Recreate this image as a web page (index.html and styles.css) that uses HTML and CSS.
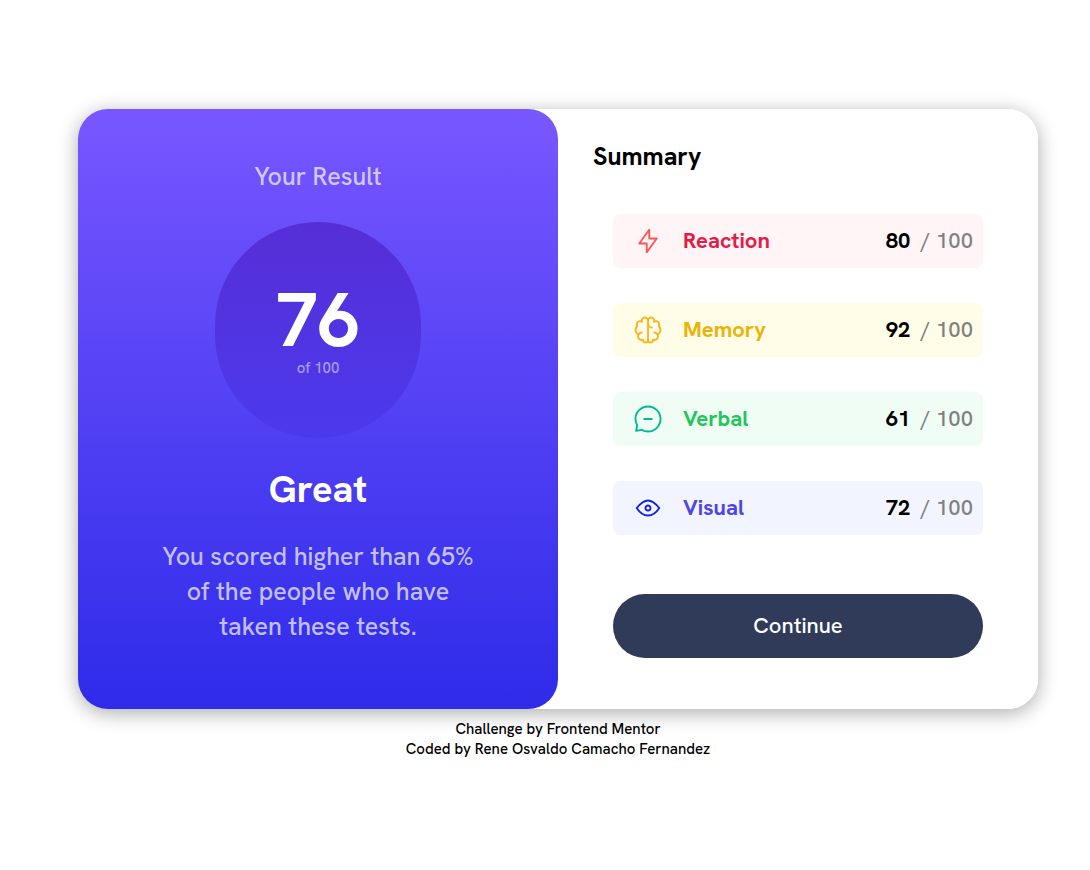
FILE: index.html
```html
<!DOCTYPE html>
<html lang="en">
<head>
  <meta charset="UTF-8">
  <meta name="viewport" content="width=device-width, initial-scale=1">
  <title>Results summary</title>
  <link rel="stylesheet" href="styles.css">
</head>
<body>
  <main class="card">
    <section class="result">
      <h1 class="result-title">Your Result</h1>
      <div class="score">
        <span class="score-value">76</span>
        <span class="score-total">of 100</span>
      </div>
      <h2 class="grade">Great</h2>
      <p class="description">You scored higher than 65% of the people who have taken these tests.</p>
    </section>
    <section class="summary">
      <h2 class="summary-title">Summary</h2>
      <ul class="stats">
        <li class="stat reaction">
          <svg class="icon" viewBox="0 0 20 20" aria-hidden="true"><path d="M10.833 8.333V2.5l-6.666 9.167h5V17.5l6.666-9.167h-5Z"/></svg>
          <span class="stat-name">Reaction</span>
          <span class="stat-score"><strong>80</strong> / 100</span>
        </li>
        <li class="stat memory">
          <svg class="icon" viewBox="0 0 20 20" aria-hidden="true"><path d="M5.833 11.667a2.5 2.5 0 1 0 .834 4.858"/><path d="M3.553 13.004a3.333 3.333 0 0 1-.728-5.53m.025-.067a2.083 2.083 0 0 1 2.983-2.824m.199.054A2.083 2.083 0 1 1 10 3.75v12.917a1.667 1.667 0 0 1-3.333 0M10 5.833a2.5 2.5 0 0 0 2.5 2.5m1.667 3.334a2.5 2.5 0 1 1-.834 4.858"/><path d="M16.447 13.004a3.334 3.334 0 0 0 .728-5.53m-.025-.067a2.083 2.083 0 0 0-2.983-2.824M10 3.75a2.085 2.085 0 0 1 2.538-2.033 2.084 2.084 0 0 1 1.43 2.92m-.635 12.03a1.667 1.667 0 0 1-3.333 0"/></svg>
          <span class="stat-name">Memory</span>
          <span class="stat-score"><strong>92</strong> / 100</span>
        </li>
        <li class="stat verbal">
          <svg class="icon" viewBox="0 0 20 20" aria-hidden="true"><path d="M7.5 10h5M10 18.333A8.333 8.333 0 1 0 1.667 10c0 1.518.406 2.942 1.115 4.167l-.699 3.75 3.75-.699A8.295 8.295 0 0 0 10 18.333Z"/></svg>
          <span class="stat-name">Verbal</span>
          <span class="stat-score"><strong>61</strong> / 100</span>
        </li>
        <li class="stat visual">
          <svg class="icon" viewBox="0 0 20 20" aria-hidden="true"><path d="M10 11.667a1.667 1.667 0 1 0 0-3.334 1.667 1.667 0 0 0 0 3.334Z"/><path d="M17.5 10c-1.574 2.492-4.402 5-7.5 5s-5.926-2.508-7.5-5C4.416 7.632 6.66 5 10 5s5.584 2.632 7.5 5Z"/></svg>
          <span class="stat-name">Visual</span>
          <span class="stat-score"><strong>72</strong> / 100</span>
        </li>
      </ul>
      <button class="continue" type="button">Continue</button>
    </section>
  </main>
  <footer class="attribution">
    <p>Challenge by Frontend Mentor</p>
    <p>Coded by Rene Osvaldo Camacho Fernandez</p>
  </footer>
</body>
</html>
```
FILE: styles.css
```css
* {
  box-sizing: border-box;
  margin: 0;
  padding: 0;
}

body {
  padding: 109px 52px 40px 78px;
  background: #fff;
  color: #000;
  font-family: "Hanken Grotesk", Roboto, sans-serif;
}

.card {
  display: grid;
  grid-template-columns: 1fr 1fr;
  border-radius: 30px;
  box-shadow: 0 4px 20px rgba(0, 0, 0, 0.33);
}

.result {
  display: flex;
  flex-direction: column;
  align-items: center;
  padding: 50px 80px 65px;
  border-radius: 30px;
  background: linear-gradient(#7857ff, #2e2be9);
  color: #fff;
  text-align: center;
}

.result-title {
  margin-bottom: 28px;
  color: rgba(255, 255, 255, 0.7);
  font-size: 25px;
  font-weight: 500;
  line-height: 35px;
}

.score {
  display: flex;
  flex-direction: column;
  align-items: center;
  min-width: 206px;
  padding: 60px;
  border-radius: 120px;
  background: linear-gradient(#562ed6, #4b3aed);
}

.score-value {
  font-size: 75px;
  font-weight: 700;
  line-height: 76px;
}

.score-total {
  color: rgba(255, 255, 255, 0.5);
  font-size: 15px;
  font-weight: 500;
  line-height: 20px;
}

.grade {
  margin: 27px 0 26px;
  font-size: 38px;
  font-weight: 700;
  line-height: 48px;
}

.description {
  color: rgba(255, 255, 255, 0.7);
  font-size: 25px;
  font-weight: 500;
  line-height: 35px;
}

.summary {
  padding: 30px 55px 51px;
  border-radius: 30px;
  background: #fff;
}

.summary-title {
  margin: 0 0 40px -20px;
  font-size: 25px;
  font-weight: 700;
  line-height: 35px;
}

.stats {
  display: grid;
  gap: 35px;
  margin-bottom: 59px;
  list-style: none;
}

.stat {
  display: flex;
  align-items: center;
  gap: 20px;
  padding: 12px 10px 12px 20px;
  border-radius: 7px;
  font-size: 22px;
  font-weight: 500;
  line-height: 30px;
}

.icon {
  width: 30px;
  height: 30px;
  fill: none;
  stroke: currentColor;
  stroke-width: 1.25;
  stroke-linecap: round;
  stroke-linejoin: round;
}

.stat-name {
  flex: 1;
  font-weight: 700;
}

.stat-score {
  color: #808080;
}

.stat-score strong {
  margin-right: 5px;
  color: #000;
  font-weight: 700;
}

.reaction { background: #fff5f6; }
.reaction .icon { color: #f55; }
.reaction .stat-name { color: #e11d48; }

.memory { background: #fffde7; }
.memory .icon { color: #ffb21e; }
.memory .stat-name { color: #eab308; }

.verbal { background: #f0fdf5; }
.verbal .icon { color: #00bb8f; }
.verbal .stat-name { color: #22c55e; }

.visual { background: #f2f5ff; }
.visual .icon { color: #1125d6; }
.visual .stat-name { color: #4f46e5; }

.continue {
  display: block;
  width: 100%;
  padding: 16px;
  border: 0;
  border-radius: 32px;
  background: #303b5a;
  color: #fff;
  font: 500 22px/32px "Hanken Grotesk", Roboto, sans-serif;
  cursor: pointer;
}

.attribution {
  margin-top: 10px;
  font-size: 15px;
  font-weight: 500;
  line-height: 20px;
  text-align: center;
}
```
